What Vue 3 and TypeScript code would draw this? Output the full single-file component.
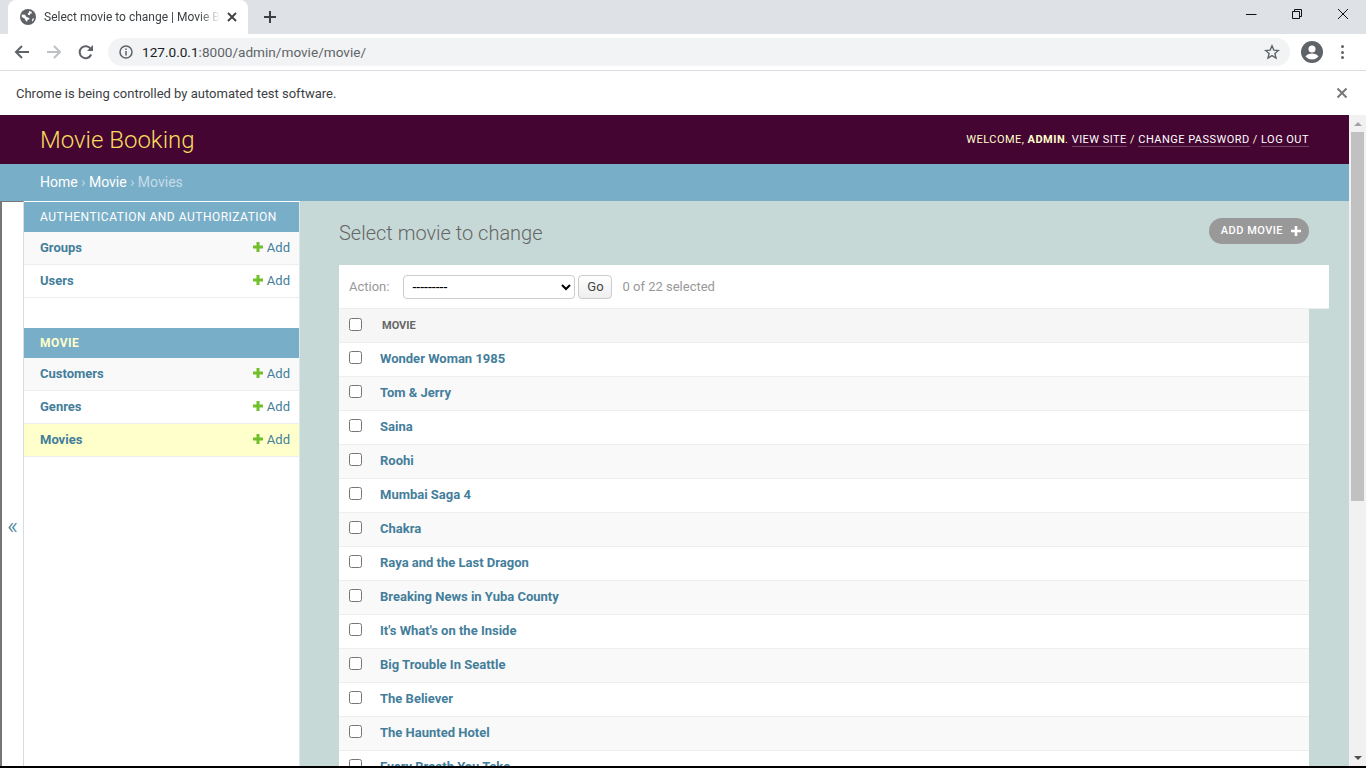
<script setup lang="ts">
interface NavRow {
  name: string
  current?: boolean
}

interface NavGroup {
  title: string
  current?: boolean
  rows: NavRow[]
}

const groups: NavGroup[] = [
  {
    title: 'Authentication and Authorization',
    rows: [{ name: 'Groups' }, { name: 'Users' }],
  },
  {
    title: 'Movie',
    current: true,
    rows: [{ name: 'Customers' }, { name: 'Genres' }, { name: 'Movies', current: true }],
  },
]

const movies = [
  'Wonder Woman 1985',
  'Tom & Jerry',
  'Saina',
  'Roohi',
  'Mumbai Saga 4',
  'Chakra',
  'Raya and the Last Dragon',
  'Breaking News in Yuba County',
  "It's What's on the Inside",
  'Big Trouble In Seattle',
  'The Believer',
  'The Haunted Hotel',
  'Every Breath You Take',
]
</script>

<template>
  <div class="window">
    <div class="tabstrip">
      <div class="tab">
        <svg class="globe" width="16" height="16" viewBox="0 0 16 16">
          <circle cx="8" cy="8" r="8" fill="#5f6368" />
          <path fill="#fff" d="M1.800 5.500L5 5.800l1.500 2.200 2.800 1v1.300L7.300 11v1.800L5.800 12 4.800 9.800 1.700 8zM9 2l2.500.7.500 1.600-1.800.5-.5 1.400-1.700-.5-.3-1.200L9 3.500zM12.300 9.800l1.800-.5-.7 2.200-1.300 1.200z" />
        </svg>
        <span class="tab-title">Select movie to change | Movie Booking</span>
        <svg class="tab-close" width="10" height="10" viewBox="0 0 10 10">
          <path d="M1 1l8 8M9 1l-8 8" stroke="#3c4043" stroke-width="1.800" fill="none" />
        </svg>
      </div>
      <svg class="new-tab" width="14" height="14" viewBox="0 0 14 14">
        <path d="M7 1v12M1 7h12" stroke="#3c4043" stroke-width="2" fill="none" />
      </svg>
      <div class="window-controls">
        <svg width="12" height="12" viewBox="0 0 12 12"><path d="M1 6.500h10.500" stroke="#111" fill="none" /></svg>
        <svg width="12" height="12" viewBox="0 0 12 12">
          <path d="M1.500 3.500h7v7h-7zM3.500 3.500v-2h7v7h-2" stroke="#111" fill="none" />
        </svg>
        <svg width="12" height="12" viewBox="0 0 12 12"><path d="M1 1l10 10M11 1L1 11" stroke="#111" fill="none" /></svg>
      </div>
    </div>

    <div class="toolbar">
      <svg width="16" height="16" viewBox="0 0 16 16">
        <path d="M15 8H2M8 2L2 8l6 6" stroke="#5f6368" stroke-width="2" fill="none" />
      </svg>
      <svg width="16" height="16" viewBox="0 0 16 16">
        <path d="M1 8h13M8 2l6 6-6 6" stroke="#bdc1c6" stroke-width="2" fill="none" />
      </svg>
      <svg width="16" height="16" viewBox="0 0 16 16">
        <path d="M13.200 10.500a6 6 0 1 1-.3-5.300" stroke="#5f6368" stroke-width="2" fill="none" />
        <path d="M15 1v6H9z" fill="#5f6368" />
      </svg>
      <div class="omnibox">
        <svg width="16" height="16" viewBox="0 0 16 16">
          <circle cx="8" cy="8" r="6" stroke="#5f6368" stroke-width="1.500" fill="none" />
          <path d="M8 7v4.500M8 4.500v1.500" stroke="#5f6368" stroke-width="1.500" fill="none" />
        </svg>
        <span class="url"><span class="host">127.0.0.1</span>:8000/admin/movie/movie/</span>
        <svg class="star" width="16" height="16" viewBox="0 0 16 16">
          <path d="M8 1.800l1.800 4.300 4.600.4-3.500 3 1.100 4.500L8 11.600 4 14l1.100-4.500-3.500-3 4.600-.4z" stroke="#5f6368" stroke-width="1.400" fill="none" />
        </svg>
      </div>
      <svg class="avatar" width="22" height="22" viewBox="0 0 22 22">
        <circle cx="11" cy="11" r="11" fill="#5f6368" />
        <circle cx="11" cy="8" r="3.500" fill="#fff" />
        <path d="M4.500 15.500c1.500-2.300 4-3 6.500-3s5 .7 6.500 3a8.500 8.500 0 0 1-13 0z" fill="#fff" />
      </svg>
      <div class="dots"><i></i><i></i><i></i></div>
    </div>

    <div class="infobar">
      <span>Chrome is being controlled by automated test software.</span>
      <svg width="12" height="12" viewBox="0 0 12 12">
        <path d="M1.500 1.500l9 9M10.500 1.500l-9 9" stroke="#777" stroke-width="2" fill="none" />
      </svg>
    </div>

    <div class="viewport">
      <div class="page">
        <header class="site-header">
          <div class="brand">Movie Booking</div>
          <div class="user-tools">
            Welcome, <strong>admin</strong>. <a>View site</a> / <a>Change password</a> / <a>Log out</a>
          </div>
        </header>
        <div class="breadcrumbs">
          <a>Home</a> › <a>Movie</a> › <span>Movies</span>
        </div>
        <div class="body">
          <button class="nav-toggle">«</button>
          <nav class="sidebar">
            <section v-for="group in groups" :key="group.title" class="app-group">
              <h2 :class="{ current: group.current }">{{ group.title }}</h2>
              <div v-for="row in group.rows" :key="row.name" class="nav-row" :class="{ selected: row.current }">
                <a class="model">{{ row.name }}</a>
                <a class="add">
                  <svg width="10" height="10" viewBox="0 0 10 10"><path d="M3.500 0h3v3.500H10v3H6.500V10h-3V6.500H0v-3h3.500z" fill="#70bf2b" /></svg>
                  Add
                </a>
              </div>
            </section>
          </nav>
          <main class="content">
            <div class="title-row">
              <h1>Select movie to change</h1>
              <a class="add-movie">
                Add movie
                <svg width="10" height="10" viewBox="0 0 10 10"><path d="M3.700 0h2.600v3.700H10v2.600H6.300V10H3.700V6.300H0V3.700h3.700z" fill="#fff" /></svg>
              </a>
            </div>
            <div class="actions">
              <label>Action:</label>
              <select class="action-select">
                <option>---------</option>
              </select>
              <button class="go">Go</button>
              <span class="counter">0 of 22 selected</span>
            </div>
            <div class="table">
              <div class="head">
                <input type="checkbox" />
                <span>Movie</span>
              </div>
              <div v-for="movie in movies" :key="movie" class="row">
                <input type="checkbox" />
                <a>{{ movie }}</a>
              </div>
            </div>
          </main>
        </div>
      </div>
      <div class="scrollbar">
        <div class="arrow up"></div>
        <div class="track"><div class="thumb"></div></div>
        <div class="arrow down"></div>
      </div>
    </div>
    <div class="bottom-edge"></div>
  </div>
</template>

<style scoped>
.window {
  width: 1366px;
  height: 768px;
  overflow: hidden;
  display: flex;
  flex-direction: column;
  background: #fff;
  font-family: Roboto, "Liberation Sans", sans-serif;
}

.tabstrip {
  height: 34px;
  flex: none;
  background: #dee1e6;
  display: flex;
  align-items: center;
  padding-left: 8px;
  position: relative;
}

.tab {
  width: 240px;
  height: 34px;
  background: #fff;
  border-radius: 8px 8px 0 0;
  display: flex;
  align-items: center;
  padding: 0 10px 0 12px;
  box-sizing: border-box;
  gap: 8px;
}

.tab-title {
  width: 176px;
  white-space: nowrap;
  overflow: hidden;
  font: 12px Roboto, sans-serif;
  color: #3c4043;
  -webkit-mask-image: linear-gradient(90deg, #000 88%, transparent);
  mask-image: linear-gradient(90deg, #000 88%, transparent);
}

.tab-close {
  flex: none;
  margin-left: -1px;
}

.new-tab {
  margin-left: 15px;
}

.window-controls {
  margin-left: auto;
  display: flex;
  gap: 34px;
  padding-right: 17px;
  margin-top: -6px;
}

.toolbar {
  height: 37px;
  flex: none;
  box-sizing: border-box;
  border-bottom: 1px solid #dadce0;
  display: flex;
  align-items: center;
  padding-left: 14px;
  gap: 16px;
}

.omnibox {
  margin-left: -2px;
  width: 1182px;
  height: 28px;
  border-radius: 14px;
  background: #f1f3f4;
  display: flex;
  align-items: center;
  padding: 0 10px;
  box-sizing: border-box;
  gap: 8px;
}

.url {
  font: 13.6px Roboto, sans-serif;
  color: #5f6368;
}

.host {
  color: #202124;
}

.star {
  margin-left: auto;
}

.avatar {
  margin-left: -5px;
}

.dots {
  display: flex;
  flex-direction: column;
  gap: 2.500px;
  margin-left: 2px;
}

.dots i {
  width: 3px;
  height: 3px;
  border-radius: 50%;
  background: #5f6368;
}

.infobar {
  height: 44px;
  flex: none;
  display: flex;
  align-items: center;
  justify-content: space-between;
  padding: 0 18px 0 16px;
  font: 13px Roboto, sans-serif;
  color: #3c4043;
}

.viewport {
  height: 651px;
  flex: none;
  display: flex;
  overflow: hidden;
}

.page {
  flex: 1;
  min-width: 0;
  display: flex;
  flex-direction: column;
}

.site-header {
  height: 49px;
  flex: none;
  background: #450533;
  display: flex;
  align-items: center;
  justify-content: space-between;
  padding: 0 40px;
  box-sizing: border-box;
}

.brand {
  font-size: 24px;
  font-weight: 300;
  color: #f5dd5d;
}

.user-tools {
  font-size: 11px;
  letter-spacing: 0.47px;
  text-transform: uppercase;
  color: #ffc;
}

.user-tools strong {
  font-weight: 700;
}

.user-tools a {
  color: #fff;
  border-bottom: 1px solid rgba(255, 255, 255, 0.25);
}

.breadcrumbs {
  height: 37px;
  flex: none;
  background: #79aec8;
  padding: 0 40px 1px;
  display: flex;
  align-items: center;
  gap: 3.5px;
  font-size: 14px;
  color: #c4dce8;
  box-sizing: border-box;
}

.breadcrumbs a {
  color: #fff;
}

.body {
  flex: 1;
  min-height: 0;
  display: flex;
  background: #c7d9d6;
}

.nav-toggle {
  width: 24px;
  flex: none;
  padding: 84px 0 0;
  background: #fff;
  border: none;
  border-left: 2px solid #777;
  border-top: 1px solid #777;
  border-right: 1px solid #d6dcdc;
  box-sizing: border-box;
  color: #447e9b;
  font-size: 24px;
  font-weight: 300;
  font-family: Roboto, sans-serif;
}

.sidebar {
  width: 276px;
  flex: none;
  background: #fff;
  border-top: 1px solid #fff;
  border-right: 1px solid #dfe8e6;
  box-sizing: border-box;
}

.app-group {
  margin-bottom: 30px;
}

.app-group h2 {
  margin: 0;
  height: 30px;
  padding: 0 16px 1px;
  box-sizing: border-box;
  display: flex;
  align-items: center;
  background: #79aec8;
  color: #fff;
  font-size: 12px;
  font-weight: 400;
  letter-spacing: 0.5px;
  text-transform: uppercase;
  white-space: nowrap;
}

.app-group h2.current {
  font-weight: 700;
  color: #ffc;
}

.nav-row {
  height: 33px;
  display: flex;
  align-items: center;
  justify-content: space-between;
  padding: 0 9px 2px 16px;
  box-sizing: border-box;
  font-size: 13px;
  border-bottom: 1px solid #eee;
}

.nav-row:nth-of-type(odd) {
  background: #f9f9f9;
}

.nav-row.selected {
  background: #ffc;
}

.model {
  font-weight: 700;
  color: #447e9b;
}

.add {
  color: #447e9b;
  display: flex;
  align-items: center;
  gap: 4px;
}

.content {
  flex: 1;
  min-width: 0;
  padding: 0 20px 0 39px;
}

.title-row {
  height: 64px;
  display: flex;
  align-items: flex-start;
  justify-content: space-between;
  padding-right: 20px;
}

.title-row h1 {
  margin: 20px 0 0;
  font-size: 20px;
  font-weight: 300;
  color: #666;
}

.add-movie {
  margin-top: 17px;
  height: 26px;
  padding: 0 8px 2px 12px;
  box-sizing: border-box;
  border-radius: 13px;
  background: #999;
  color: #fff;
  font-size: 11px;
  font-weight: 500;
  letter-spacing: 0.47px;
  text-transform: uppercase;
  display: flex;
  align-items: center;
  gap: 8px;
}

.add-movie svg {
  margin-top: 2px;
}

.actions {
  height: 44px;
  background: #fff;
  display: flex;
  align-items: center;
  padding-left: 10px;
  box-sizing: border-box;
  font-size: 13px;
  color: #999;
  border-bottom: 1px solid #eee;
}

.action-select {
  width: 172px;
  height: 24px;
  margin-left: 14px;
  border: 1px solid #ccc;
  border-radius: 4px;
  background: #fff;
  padding: 0 4px 0 4px;
  font: 14px Roboto, sans-serif;
  color: #000;
}

.go {
  width: 34px;
  height: 24px;
  margin-left: 3px;
  padding: 0;
  border: 1px solid #ccc;
  border-radius: 4px;
  background: linear-gradient(#fff, #eee);
  color: #444;
  font: 13px Roboto, sans-serif;
}

.counter {
  margin-left: 10px;
}

.table {
  margin-right: 20px;
  background: #fff;
}

.head,
.row {
  display: flex;
  align-items: center;
  box-sizing: border-box;
  padding: 0 0 2px 10px;
  border-bottom: 1px solid #eee;
  height: 34px;
}

.head input,
.row input {
  margin: -2px 0 0;
  width: 13px;
  height: 13px;
  flex: none;
}

.head {
  padding-bottom: 0;
  background: #f6f6f6;
  font-size: 11px;
  font-weight: 700;
  color: #666;
  text-transform: uppercase;
}

.head span {
  margin-left: 20px;
}

.row {
  font-size: 13px;
  font-weight: 700;
  color: #447e9b;
}

.row a {
  margin-left: 18px;
}

.row:nth-child(odd) {
  background: #f9f9f9;
}

.scrollbar {
  width: 17px;
  flex: none;
  background: #f1f1f1;
  display: flex;
  flex-direction: column;
}

.arrow {
  height: 17px;
  flex: none;
  display: flex;
  align-items: center;
  justify-content: center;
}

.arrow::after {
  content: "";
  border-left: 4px solid transparent;
  border-right: 4px solid transparent;
}

.arrow.up::after {
  border-bottom: 4px solid #a3a3a3;
}

.arrow.down::after {
  border-top: 4px solid #505050;
}

.track {
  flex: 1;
}

.thumb {
  width: 13px;
  height: 369px;
  margin-left: 2px;
  background: #c1c1c1;
}

.bottom-edge {
  height: 2px;
  flex: none;
  background: #000;
}
</style>
